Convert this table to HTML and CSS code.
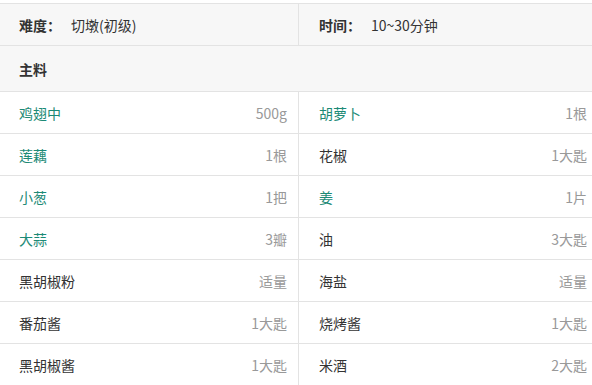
FILE: index.html
```html
<!DOCTYPE html>
<html lang="zh">
<head>
<meta charset="utf-8">
<link rel="stylesheet" href="styles.css">
</head>
<body>
<div class="recipe">
  <div class="row head">
    <div class="cell"><span class="lbl">难度：</span><span class="val-dark">切墩(初级)</span></div>
    <div class="cell"><span class="lbl">时间：</span><span class="val-dark">10~30分钟</span></div>
  </div>
  <div class="row section">
    <div class="full">主料</div>
  </div>
  <div class="row">
    <div class="cell"><span class="name link">鸡翅中</span><span class="amt">500g</span></div>
    <div class="cell"><span class="name link">胡萝卜</span><span class="amt">1根</span></div>
  </div>
  <div class="row">
    <div class="cell"><span class="name link">莲藕</span><span class="amt">1根</span></div>
    <div class="cell"><span class="name">花椒</span><span class="amt">1大匙</span></div>
  </div>
  <div class="row">
    <div class="cell"><span class="name link">小葱</span><span class="amt">1把</span></div>
    <div class="cell"><span class="name link">姜</span><span class="amt">1片</span></div>
  </div>
  <div class="row">
    <div class="cell"><span class="name link">大蒜</span><span class="amt">3瓣</span></div>
    <div class="cell"><span class="name">油</span><span class="amt">3大匙</span></div>
  </div>
  <div class="row">
    <div class="cell"><span class="name">黑胡椒粉</span><span class="amt">适量</span></div>
    <div class="cell"><span class="name">海盐</span><span class="amt">适量</span></div>
  </div>
  <div class="row">
    <div class="cell"><span class="name">番茄酱</span><span class="amt">1大匙</span></div>
    <div class="cell"><span class="name">烧烤酱</span><span class="amt">1大匙</span></div>
  </div>
  <div class="row">
    <div class="cell"><span class="name">黑胡椒酱</span><span class="amt">1大匙</span></div>
    <div class="cell"><span class="name">米酒</span><span class="amt">2大匙</span></div>
  </div>
</div>
</body>
</html>
```
FILE: styles.css
```css
html, body {
  margin: 0;
  padding: 0;
  background: #fff;
  overflow: hidden;
}
body {
  font-family: "Noto Sans CJK SC", "Noto Sans", sans-serif;
  font-size: 14px;
  color: #333;
}
.recipe {
  margin-top: 3px;
  width: 598px;
  border-top: 1px solid #e3e3e3;
}
.row {
  display: grid;
  grid-template-columns: 299px 299px;
  height: 41px;
  border-bottom: 1px solid #e3e3e3;
}
.cell {
  display: flex;
  align-items: center;
  justify-content: space-between;
  padding: 0 11px 0 19px;
  line-height: 20px;
}
.cell:first-child {
  border-right: 1px solid #e3e3e3;
}
.cell:last-child {
  padding-left: 20px;
}
.head {
  background: #f7f7f7;
}
.head .cell {
  justify-content: flex-start;
}
.lbl {
  font-weight: bold;
  width: 52px;
}
.val-dark {
  color: #333;
}
.section {
  background: #f7f7f7;
  height: 45px;
  grid-template-columns: 1fr;
}
.full {
  display: flex;
  align-items: center;
  padding: 0 19px;
  font-weight: bold;
}
.name {
  color: #333;
}
.name.link {
  color: #1c8a76;
}
.amt {
  color: #999;
}
```
